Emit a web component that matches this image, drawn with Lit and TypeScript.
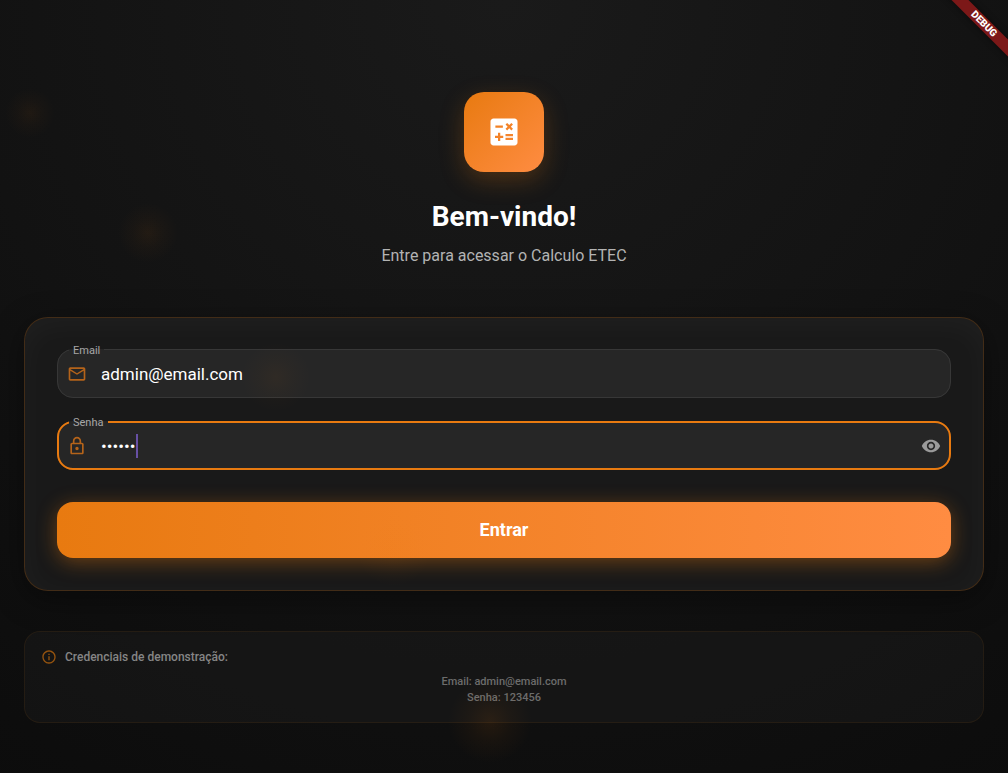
import { LitElement, html, css, svg } from "lit";
import { customElement, state } from "lit/decorators.js";

const icons = {
  calculate: svg`<path fill-rule="evenodd" d="M19 3H5c-1.1 0-2 .9-2 2v14c0 1.1.9 2 2 2h14c1.1 0 2-.9 2-2V5c0-1.1-.9-2-2-2zm-5.97 4.06L14.09 6l1.41 1.41L16.91 6l1.06 1.06-1.41 1.41 1.41 1.41-1.06 1.06-1.41-1.4-1.41 1.41-1.06-1.06 1.41-1.41-1.41-1.42zm-6.78.66h5v1.5h-5v-1.5zM11.5 16h-2v2H8v-2H6v-1.5h2v-2h1.5v2h2V16zm6.5 1.25h-5v-1.5h5v1.5zm0-2.5h-5v-1.5h5v1.5z"/>`,
  mail: svg`<path d="M22 6c0-1.100-.9-2-2-2H4c-1.100 0-2 .9-2 2v12c0 1.100.9 2 2 2h16c1.100 0 2-.9 2-2V6zm-2 0l-8 5-8-5h16zm0 12H4V8l8 5 8-5v10z"/>`,
  lock: svg`<path d="M18 8h-1V6c0-2.760-2.240-5-5-5S7 3.240 7 6v2H6c-1.100 0-2 .9-2 2v10c0 1.100.9 2 2 2h12c1.100 0 2-.9 2-2V10c0-1.100-.9-2-2-2zM9 6c0-1.660 1.340-3 3-3s3 1.340 3 3v2H9V6zm9 14H6V10h12v10zm-6-3c1.100 0 2-.9 2-2s-.9-2-2-2-2 .9-2 2 .9 2 2 2z"/>`,
  eye: svg`<path d="M12 4.500C7 4.500 2.730 7.610 1 12c1.730 4.390 6 7.500 11 7.500s9.270-3.110 11-7.500c-1.730-4.390-6-7.500-11-7.500zM12 17c-2.760 0-5-2.240-5-5s2.240-5 5-5 5 2.240 5 5-2.240 5-5 5zm0-8c-1.660 0-3 1.340-3 3s1.340 3 3 3 3-1.340 3-3-1.340-3-3-3z"/>`,
  info: svg`<path d="M11 7h2v2h-2zm0 4h2v6h-2zm1-9C6.480 2 2 6.480 2 12s4.480 10 10 10 10-4.480 10-10S17.520 2 12 2zm0 18c-4.410 0-8-3.590-8-8s3.590-8 8-8 8 3.590 8 8-3.590 8-8 8z"/>`,
};

@customElement("app-root")
export class AppRoot extends LitElement {
  @state() private reveal = false;

  static styles = css`
    :host {
      display: block;
      position: relative;
      overflow: hidden;
      min-height: 100vh;
      color: #fff;
      font-family: Roboto, "Liberation Sans", sans-serif;
      background: radial-gradient(circle 1160px at 50% 0, #1a1a1a, #0d0d0d 75%, #0a0a0a);
    }
    * {
      box-sizing: border-box;
    }
    svg {
      display: block;
      fill: currentColor;
      flex: none;
    }
    .glows {
      position: absolute;
      inset: 0;
      width: 100%;
      height: 100%;
      pointer-events: none;
    }
    .page {
      position: relative;
      min-height: 100vh;
      padding: 41px 24px 0;
      display: flex;
      flex-direction: column;
      justify-content: center;
    }
    header {
      display: flex;
      flex-direction: column;
      align-items: center;
      text-align: center;
    }
    .logo {
      display: grid;
      place-items: center;
      width: 80px;
      height: 80px;
      border-radius: 20px;
      background: linear-gradient(135deg, #e87a10, #ff8c42);
      box-shadow: 0 8px 24px rgba(232, 122, 16, 0.25);
    }
    h1 {
      margin: 24px 0 5px;
      font-size: 28px;
      line-height: 42px;
      font-weight: 700;
    }
    .subtitle {
      margin: 0;
      font-size: 16px;
      line-height: 26px;
      color: #b3b3b3;
    }
    .card {
      margin-top: 48px;
      padding: 32px;
      border: 1px solid rgba(232, 122, 16, 0.2);
      border-radius: 24px;
      background: #191919;
      box-shadow:
        0 8px 32px rgba(0, 0, 0, 0.4),
        inset 0 8px 32px rgba(255, 255, 255, 0.03);
      display: flex;
      flex-direction: column;
      gap: 24px;
    }
    fieldset {
      min-width: 0;
      margin: -6px 0 0;
      height: 54px;
      padding: 0 10px 0 9px;
      border: 1px solid #373737;
      border-radius: 16px;
      background: #262626;
    }
    fieldset.active {
      border: 2px solid #e87a10;
      padding: 0 8px;
    }
    legend {
      margin-left: 2px;
      padding: 0 4px;
      height: 12px;
      font-size: 11px;
      line-height: 14px;
      color: #a6a6a6;
    }
    .active legend {
      padding-right: 5px;
    }
    .row {
      display: flex;
      align-items: center;
      height: 36px;
    }
    .row > svg {
      color: #b4631a;
      margin-right: 14px;
    }
    input {
      flex: 1;
      min-width: 0;
      padding: 0;
      border: 0;
      outline: 0;
      background: none;
      color: #fff;
      font-family: inherit;
      font-size: 17px;
      line-height: 24px;
      height: 24px;
    }
    .secret {
      flex: none;
      field-sizing: content;
      caret-color: transparent;
    }
    .caret {
      width: 2px;
      height: 24px;
      margin-left: 1px;
      background: #6750a4;
    }
    .toggle {
      margin-left: auto;
      padding: 0;
      border: 0;
      background: none;
      color: #9a9a9a;
      cursor: pointer;
    }
    .submit {
      margin-top: 8px;
      height: 56px;
      border: 0;
      border-radius: 16px;
      background: linear-gradient(90deg, #e87a10, #ff8c42);
      box-shadow: 0 4px 20px rgba(232, 122, 16, 0.4);
      color: #fff;
      font-family: inherit;
      font-size: 18px;
      font-weight: 700;
      cursor: pointer;
    }
    .demo {
      margin-top: 40px;
      padding: 16px;
      border: 1px solid rgba(232, 122, 16, 0.08);
      border-radius: 16px;
      background: rgba(30, 30, 30, 0.4);
      color: #6c6c6c;
      font-size: 11px;
      line-height: 16px;
      font-weight: 500;
      text-align: center;
    }
    .demo h2 {
      display: flex;
      align-items: center;
      gap: 8px;
      margin: 0 0 8px;
      font-size: 12px;
      line-height: 18px;
      font-weight: 500;
      color: #858585;
    }
    .demo h2 svg {
      color: #96540f;
    }
    .demo p {
      margin: 0;
    }
    .corner {
      position: absolute;
      top: 0;
      right: 0;
      width: 80px;
      height: 80px;
      overflow: hidden;
      pointer-events: none;
    }
    .banner {
      position: absolute;
      top: 18px;
      right: -36px;
      width: 120px;
      height: 12px;
      transform: rotate(45deg);
      background: #7c1818;
      box-shadow: 0 0 6px rgba(0, 0, 0, 0.5);
      font-size: 10px;
      line-height: 12px;
      font-weight: 900;
      text-align: center;
    }
  `;

  private icon(name: keyof typeof icons, size: number) {
    return html`<svg width=${size} height=${size} viewBox="0 0 24 24" aria-hidden="true">${icons[name]}</svg>`;
  }

  render() {
    const glows = [
      [30, 113, 25, 0.6],
      [148, 233, 30, 0.7],
      [276, 377, 35, 0.5],
      [394, 549, 38, 0.5],
      [490, 721, 42, 1],
    ];
    return html`
      <div class="page">
        <header>
          <div class="logo">${this.icon("calculate", 36)}</div>
          <h1>Bem-vindo!</h1>
          <p class="subtitle">Entre para acessar o Calculo ETEC</p>
        </header>
        <form class="card" @submit=${(e: Event) => e.preventDefault()}>
          <fieldset>
            <legend><label for="email">Email</label></legend>
            <div class="row">
              ${this.icon("mail", 20)}
              <input id="email" type="text" inputmode="email" value="admin@email.com" />
            </div>
          </fieldset>
          <fieldset class="active">
            <legend><label for="password">Senha</label></legend>
            <div class="row">
              ${this.icon("lock", 20)}
              <input id="password" class="secret" type=${this.reveal ? "text" : "password"} value="123456" />
              <span class="caret"></span>
              <button
                class="toggle"
                type="button"
                aria-label="Mostrar senha"
                @click=${() => (this.reveal = !this.reveal)}
              >
                ${this.icon("eye", 20)}
              </button>
            </div>
          </fieldset>
          <button class="submit" type="submit">Entrar</button>
        </form>
        <section class="demo">
          <h2>${this.icon("info", 16)}Credenciais de demonstração:</h2>
          <p>Email: admin@email.com</p>
          <p>Senha: 123456</p>
        </section>
      </div>
      <svg class="glows" aria-hidden="true">
        <defs>
          <radialGradient id="glow">
            <stop offset="0" stop-color="#e87a10" stop-opacity="0.1" />
            <stop offset="0.5" stop-color="#e87a10" stop-opacity="0.04" />
            <stop offset="1" stop-color="#e87a10" stop-opacity="0" />
          </radialGradient>
        </defs>
        ${glows.map(([x, y, r, o]) => svg`<circle cx=${x} cy=${y} r=${r} fill="url(#glow)" opacity=${o} />`)}
      </svg>
      <div class="corner"><div class="banner">DEBUG</div></div>
    `;
  }
}
